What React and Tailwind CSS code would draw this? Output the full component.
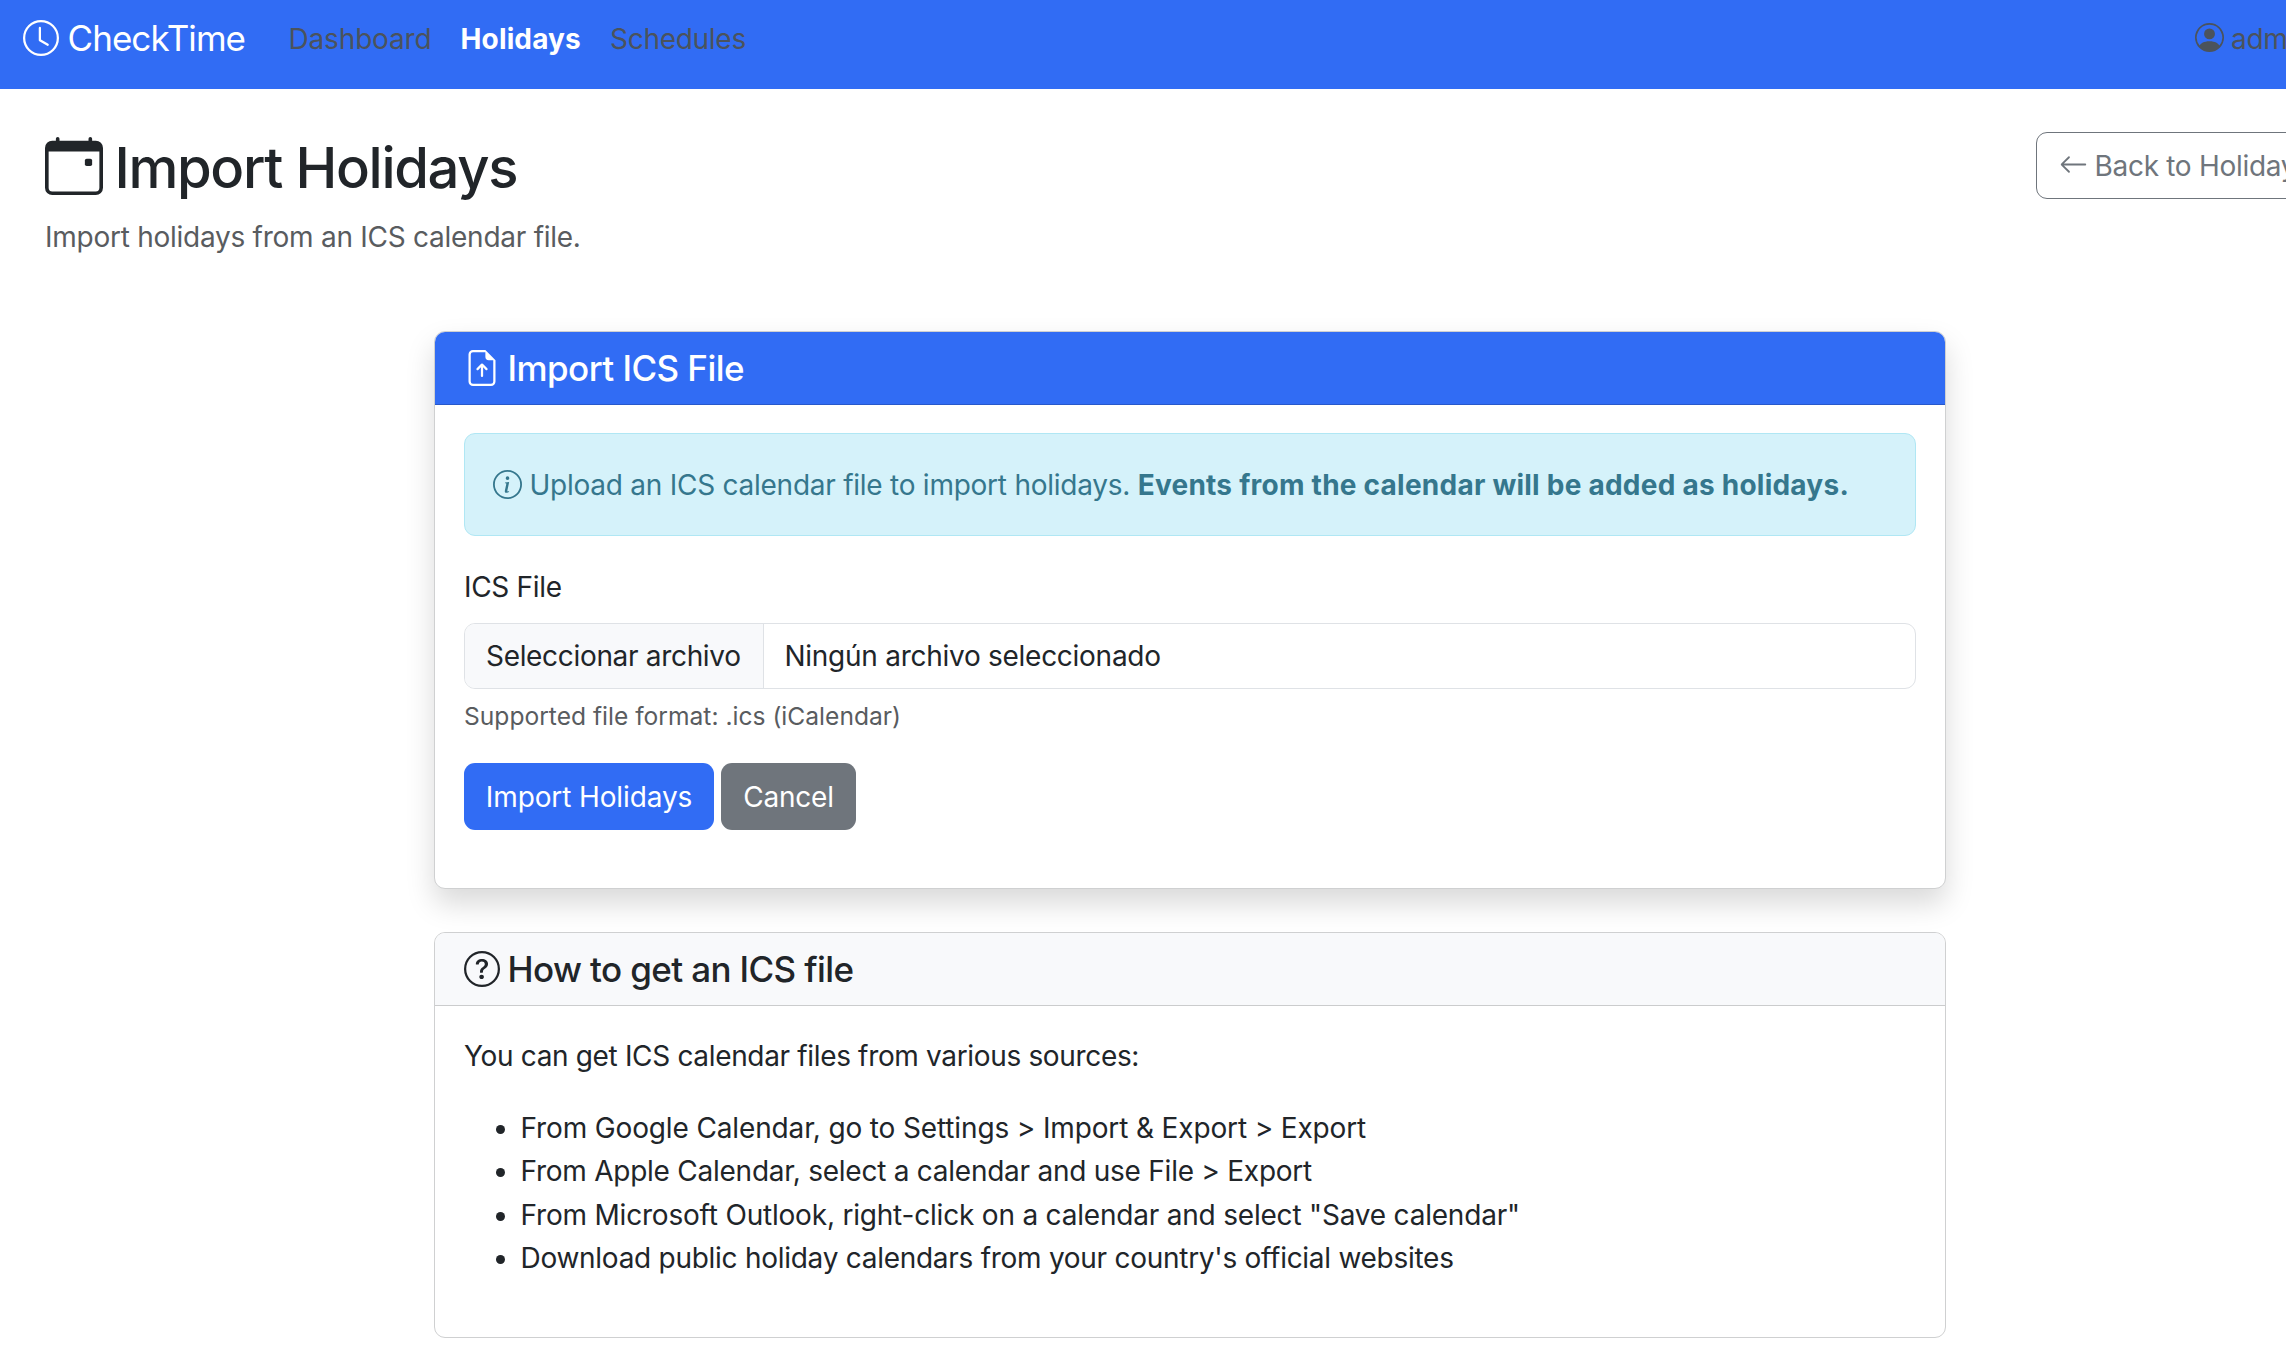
import React from "react";
import {
  BsArrowLeft,
  BsCalendarEvent,
  BsClock,
  BsFileEarmarkArrowUp,
  BsInfoCircle,
  BsPersonCircle,
  BsQuestionCircle,
} from "react-icons/bs";

function Navbar() {
  return (
    <nav className="flex h-[89px] items-start bg-[#316cf4] pl-[23px] text-[28px] leading-[44px] text-[#4b535c]">
      <a className="flex w-[265.5px] shrink-0 items-start gap-[8.5px] pt-[11px] text-[35px] leading-[54px] tracking-[-0.94px] text-white">
        <BsClock className="mt-[9px] size-[36px]" />
        CheckTime
      </a>
      <a className="w-[172px] shrink-0 pt-[17px] tracking-[-0.16px]">Dashboard</a>
      <a className="w-[149.5px] shrink-0 pt-[17px] font-bold tracking-[0.15px] text-white">Holidays</a>
      <a className="pt-[17px] tracking-[-0.28px]">Schedules</a>
      <a className="ml-auto flex w-[91px] shrink-0 items-start gap-[7px] overflow-hidden pt-[17px] tracking-[-0.28px]">
        <BsPersonCircle className="mt-[6px] size-[29px] shrink-0" />
        admin
      </a>
    </nav>
  );
}

function PageHeader() {
  return (
    <header className="flex items-start pl-[45px]">
      <div className="w-[1991px] shrink-0 pt-[44px]">
        <h1 className="flex items-start gap-[11.5px] text-[56.2px] font-medium leading-[70px] tracking-[-1.37px]">
          <BsCalendarEvent className="mt-[4px] size-[58px]" />
          Import Holidays
        </h1>
        <p className="mt-[12px] leading-[44px] tracking-[-0.26px] text-[#595c5f]">
          Import holidays from an ICS calendar file.
        </p>
      </div>
      <a className="mt-[43px] flex h-[67px] w-[290px] shrink-0 items-center gap-[7px] whitespace-nowrap rounded-[11px] border border-[#6f757c] pl-[21.5px] tracking-[-0.3px] text-[#6f757c]">
        <BsArrowLeft className="mb-[2px] size-[29px] shrink-0" />
        Back to Holidays
      </a>
    </header>
  );
}

function ImportCard() {
  return (
    <section className="h-[558px] rounded-[11px] border border-[#cfd0d1] bg-white shadow-[0_14.5px_29px_rgba(0,0,0,0.15)]">
      <h2 className="flex h-[73px] items-center gap-[7.5px] rounded-t-[10px] border-b border-[#2858ca] bg-[#316cf4] pl-[29px] text-[35px] font-medium leading-[72px] tracking-[-0.55px] text-white">
        <BsFileEarmarkArrowUp className="size-[36px]" />
        Import ICS File
      </h2>
      <div className="px-[29px] pt-[28px]">
        <div className="flex h-[103px] items-start gap-[7.5px] rounded-[11px] border border-[#b0e7f4] bg-[#d5f2fa] pl-[28px] pt-[29px] leading-[44px] text-[#35778d]">
          <BsInfoCircle className="mt-[7px] size-[29px] shrink-0" />
          <p className="whitespace-nowrap tracking-[-0.25px]">
            Upload an ICS calendar file to import holidays.{" "}
            <strong className="font-bold tracking-[0.24px]">
              Events from the calendar will be added as holidays.
            </strong>
          </p>
        </div>
        <label className="mt-[29px] block leading-[44px] tracking-[-0.3px]">ICS File</label>
        <div className="mt-[14px] flex h-[66px] overflow-hidden rounded-[11px] border border-[#dfe2e6] leading-[64px]">
          <span className="w-[299px] border-r border-[#dfe2e6] bg-[#f8f9fb] pl-[21px] tracking-[-0.32px]">
            Seleccionar archivo
          </span>
          <span className="pl-[20.5px] tracking-[-0.27px]">Ningún archivo seleccionado</span>
        </div>
        <p className="mt-[8px] text-[24.6px] leading-[38px] text-[#595c5f]">
          Supported file format: .ics (iCalendar)
        </p>
        <div className="mt-[28px] flex gap-[7px] leading-[67px] text-white">
          <button className="h-[67px] w-[250px] rounded-[11px] bg-[#316cf4] pt-px tracking-[-0.12px]">
            Import Holidays
          </button>
          <button className="h-[67px] w-[135px] rounded-[11px] bg-[#6f757c] pt-px tracking-[-0.18px]">
            Cancel
          </button>
        </div>
      </div>
    </section>
  );
}

function Step({ className, children }) {
  return (
    <li className="flex items-start">
      <span className="mr-[15.5px] mt-[18px] size-[9px] shrink-0 rounded-full bg-[#212529]" />
      <span className={className}>{children}</span>
    </li>
  );
}

function HelpCard() {
  return (
    <section className="mt-[43px] h-[406px] rounded-[11px] border border-[#cfd0d1] bg-white">
      <h2 className="flex h-[73px] items-center gap-[7.5px] rounded-t-[10px] border-b border-[#cbcccd] bg-[#f8f9fb] pl-[29px] text-[35px] font-medium leading-[72px] tracking-[-0.62px]">
        <BsQuestionCircle className="size-[36px]" />
        How to get an ICS file
      </h2>
      <div className="px-[29px] pt-[29px] leading-[43.33px]">
        <p className="tracking-[-0.34px]">You can get ICS calendar files from various sources:</p>
        <ul className="mt-[28.7px] pl-[32px]">
          <Step className="tracking-[-0.14px]">
            From Google Calendar, go to Settings &gt; Import &amp; Export &gt; Export
          </Step>
          <Step className="tracking-[-0.25px]">
            From Apple Calendar, select a calendar and use File &gt; Export
          </Step>
          <Step className="tracking-[-0.2px]">
            From Microsoft Outlook, right-click on a calendar and select "Save calendar"
          </Step>
          <Step className="tracking-[-0.275px]">
            Download public holiday calendars from your country's official websites
          </Step>
        </ul>
      </div>
    </section>
  );
}

export default function App() {
  return (
    <div className="h-[1360px] w-[2286px] overflow-hidden bg-white font-['Inter',sans-serif] text-[28px] text-[#212529]">
      <Navbar />
      <PageHeader />
      <main className="ml-[434px] mt-[72px] w-[1512px]">
        <ImportCard />
        <HelpCard />
      </main>
    </div>
  );
}
